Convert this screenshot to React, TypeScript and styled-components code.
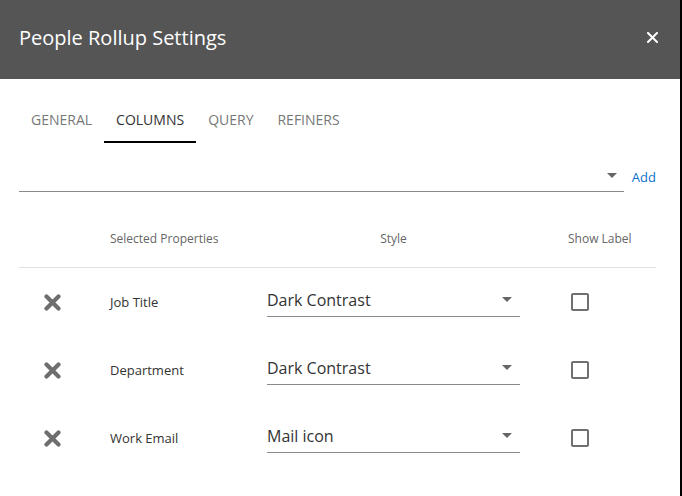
import React from "react";
import styled, { createGlobalStyle } from "styled-components";

type Column = {
  name: string;
  style: string;
};

const columns: Column[] = [
  { name: "Job Title", style: "Dark Contrast" },
  { name: "Department", style: "Dark Contrast" },
  { name: "Work Email", style: "Mail icon" },
];

const tabs = ["General", "Columns", "Query", "Refiners"];

const GlobalStyle = createGlobalStyle`
  html, body {
    margin: 0;
    padding: 0;
    background: #000;
  }
  body {
    font-family: "Open Sans", "Noto Sans", sans-serif;
  }
`;

const Caret = () => (
  <svg width="10" height="5" viewBox="0 0 10 5">
    <path d="M0 0 L10 0 L5 5 Z" fill="#666" />
  </svg>
);

const RemoveIcon = () => (
  <svg width="17" height="17" viewBox="0 0 17 17">
    <path
      d="M2.5 2.5 L14.5 14.5 M14.5 2.5 L2.5 14.5"
      stroke="#6e6e6e"
      strokeWidth="4.2"
      strokeLinecap="round"
    />
  </svg>
);

const CloseIcon = () => (
  <svg width="11" height="11" viewBox="0 0 11 11">
    <path
      d="M1 1 L10 10 M10 1 L1 10"
      stroke="#fff"
      strokeWidth="2"
      strokeLinecap="square"
    />
  </svg>
);

export default function App() {
  return (
    <>
      <GlobalStyle />
      <Dialog>
        <Header>
          <Title>People Rollup Settings</Title>
          <CloseButton aria-label="Close">
            <CloseIcon />
          </CloseButton>
        </Header>
        <Body>
          <TabBar>
            {tabs.map((t) => (
              <Tab key={t} active={t === "Columns"}>
                {t}
              </Tab>
            ))}
          </TabBar>

          <AddRow>
            <PropertyPicker>
              <Caret />
            </PropertyPicker>
            <AddLink>Add</AddLink>
          </AddRow>

          <Table>
            <HeadCell />
            <HeadCell indent={25}>Selected Properties</HeadCell>
            <HeadCell align="center">Style</HeadCell>
            <HeadCell indent={48}>Show Label</HeadCell>

            {columns.map((c) => (
              <React.Fragment key={c.name}>
                <IconCell>
                  <RemoveIcon />
                </IconCell>
                <NameCell>{c.name}</NameCell>
                <Cell>
                  <StyleSelect>
                    <span>{c.style}</span>
                    <Caret />
                  </StyleSelect>
                </Cell>
                <Cell>
                  <Checkbox />
                </Cell>
              </React.Fragment>
            ))}
          </Table>
        </Body>
      </Dialog>
    </>
  );
}

const Dialog = styled.div`
  width: 680px;
  height: 496px;
  background: #fff;
  overflow: hidden;
`;

const Header = styled.div`
  height: 79px;
  background: #555555;
  display: flex;
  align-items: center;
  justify-content: space-between;
  padding: 0 22px 4px 19px;
  box-sizing: border-box;
`;

const Title = styled.h1`
  margin: 0;
  font-size: 20px;
  font-weight: 400;
  color: #fff;
`;

const CloseButton = styled.button`
  background: none;
  border: 0;
  padding: 0;
  display: flex;
  cursor: pointer;
`;

const Body = styled.div`
  padding: 20px 24px 0 19px;
`;

const TabBar = styled.div`
  display: flex;
`;

const Tab = styled.button<{ active?: boolean }>`
  background: none;
  border: 0;
  border-bottom: 2px solid ${(p) => (p.active ? "#000" : "transparent")};
  padding: 12px;
  font-family: inherit;
  font-size: 14px;
  line-height: 18px;
  text-transform: uppercase;
  color: ${(p) => (p.active ? "#333" : "#777")};
  cursor: pointer;
`;

const AddRow = styled.div`
  display: flex;
  align-items: center;
  gap: 8px;
  margin-top: 16px;
`;

const PropertyPicker = styled.div`
  flex: 1;
  height: 33px;
  box-sizing: border-box;
  border-bottom: 1px solid #8a8a8a;
  display: flex;
  align-items: center;
  justify-content: flex-end;
  padding-right: 7px;
`;

const AddLink = styled.a`
  font-size: 13px;
  color: #0b6fc7;
  cursor: pointer;
  padding-top: 2px;
`;

const Table = styled.div`
  display: grid;
  grid-template-columns: 66px 182px 253px 1fr;
  margin-top: 39px;
`;

const HeadCell = styled.div<{ align?: string; indent?: number }>`
  font-size: 12px;
  line-height: 16px;
  color: #666;
  padding: 0 0 20px ${(p) => p.indent ?? 0}px;
  text-align: ${(p) => p.align ?? "left"};
  border-bottom: 1px solid #e1e1e1;
`;

const Cell = styled.div`
  height: 68px;
  display: flex;
  align-items: center;
`;

const IconCell = styled(Cell)`
  justify-content: center;
`;

const NameCell = styled(Cell)`
  padding-left: 25px;
  font-size: 13px;
  color: #333;
`;

const StyleSelect = styled.div`
  width: 100%;
  height: 30px;
  box-sizing: border-box;
  border-bottom: 1px solid #8a8a8a;
  display: flex;
  align-items: center;
  justify-content: space-between;
  padding: 0 8px 4px 0;
  font-size: 16px;
  color: #333;
`;

const Checkbox = styled.span`
  width: 18px;
  height: 18px;
  box-sizing: border-box;
  border: 2px solid #707070;
  border-radius: 2px;
  margin-left: 51px;
`;
